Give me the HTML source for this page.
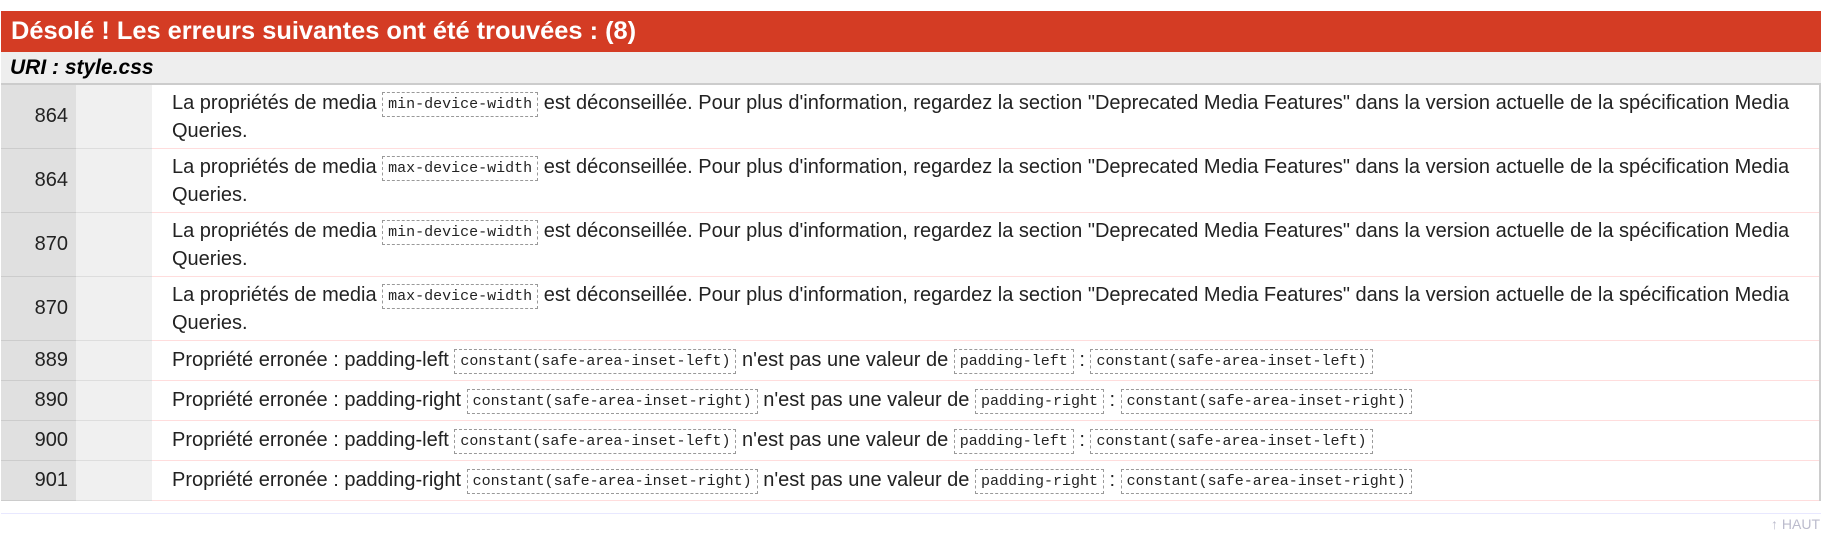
<!DOCTYPE html>
<html><head><meta charset="utf-8"><style>
body{margin:0;background:#fff;font-family:"Liberation Sans",Arial,sans-serif;}
.wrap{position:absolute;left:1px;top:11px;width:1820px;}
h2{margin:0;background:#d43c24;color:#fff;font-size:25.4px;font-weight:bold;height:41px;line-height:41px;padding-left:10px;box-sizing:border-box;}
h3{margin:0;background:#eee;font-size:21px;font-style:italic;font-weight:bold;height:33px;line-height:31px;padding-left:9px;border-bottom:2px solid #ccc;box-sizing:border-box;}
table{border-collapse:collapse;width:1820px;border-right:2px solid #ccc;}
td{border-bottom:1px solid #fdd;font-size:20px;color:#222;vertical-align:middle;}
td.n{width:66px;background:#e0e0e0;text-align:right;padding-right:8px;border-bottom:1px solid #ccc;}
td.e{width:74px;background:#f0f0f0;border-bottom:1px solid #ddd;}
td.t{padding:4px 24px 4px 20px;line-height:26px;}
tr.two td{height:55px;}
tr.one td{height:31px;}
code{font-family:"Liberation Mono",monospace;font-size:15px;border:1px dashed #999;padding:3px 5px;vertical-align:1px;}
.haut{position:absolute;right:8px;top:516px;font-size:14px;color:#bbc;}
.line{position:absolute;left:1px;top:513px;width:1820px;border-top:1px solid #e8e8ff;}
</style></head><body>
<div class="wrap">
<h2>Désolé ! Les erreurs suivantes ont été trouvées : (8)</h2>
<h3>URI : style.css</h3>
<table>
<tr class="two"><td class="n">864</td><td class="e"></td><td class="t">La propriétés de media <code>min-device-width</code> est déconseillée. Pour plus d'information, regardez la section "Deprecated Media Features" dans la version actuelle de la spécification Media Queries.</td></tr>
<tr class="two"><td class="n">864</td><td class="e"></td><td class="t">La propriétés de media <code>max-device-width</code> est déconseillée. Pour plus d'information, regardez la section "Deprecated Media Features" dans la version actuelle de la spécification Media Queries.</td></tr>
<tr class="two"><td class="n">870</td><td class="e"></td><td class="t">La propriétés de media <code>min-device-width</code> est déconseillée. Pour plus d'information, regardez la section "Deprecated Media Features" dans la version actuelle de la spécification Media Queries.</td></tr>
<tr class="two"><td class="n">870</td><td class="e"></td><td class="t">La propriétés de media <code>max-device-width</code> est déconseillée. Pour plus d'information, regardez la section "Deprecated Media Features" dans la version actuelle de la spécification Media Queries.</td></tr>
<tr class="one"><td class="n">889</td><td class="e"></td><td class="t">Propriété erronée : padding-left <code>constant(safe-area-inset-left)</code> n'est pas une valeur de <code>padding-left</code> : <code>constant(safe-area-inset-left)</code></td></tr>
<tr class="one"><td class="n">890</td><td class="e"></td><td class="t">Propriété erronée : padding-right <code>constant(safe-area-inset-right)</code> n'est pas une valeur de <code>padding-right</code> : <code>constant(safe-area-inset-right)</code></td></tr>
<tr class="one"><td class="n">900</td><td class="e"></td><td class="t">Propriété erronée : padding-left <code>constant(safe-area-inset-left)</code> n'est pas une valeur de <code>padding-left</code> : <code>constant(safe-area-inset-left)</code></td></tr>
<tr class="one"><td class="n">901</td><td class="e"></td><td class="t">Propriété erronée : padding-right <code>constant(safe-area-inset-right)</code> n'est pas une valeur de <code>padding-right</code> : <code>constant(safe-area-inset-right)</code></td></tr>
</table>
</div>
<div class="line"></div>
<div class="haut">↑ HAUT</div>
</body></html>
